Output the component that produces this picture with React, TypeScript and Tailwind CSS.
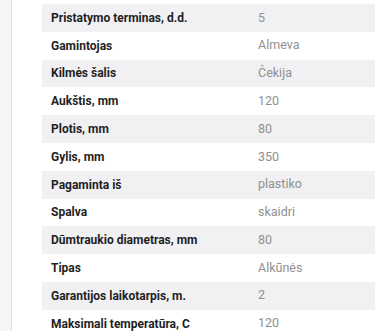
const specs: [string, string][] = [
  ["Pristatymo terminas, d.d.", "5"],
  ["Gamintojas", "Almeva"],
  ["Kilmės šalis", "Čekija"],
  ["Aukštis, mm", "120"],
  ["Plotis, mm", "80"],
  ["Gylis, mm", "350"],
  ["Pagaminta iš", "plastiko"],
  ["Spalva", "skaidri"],
  ["Dūmtraukio diametras, mm", "80"],
  ["Tipas", "Alkūnės"],
  ["Garantijos laikotarpis, m.", "2"],
  ["Maksimali temperatūra, C", "120"],
];

export default function App() {
  return (
    <div className="flex h-[331px] w-[375px] overflow-hidden bg-white font-['Roboto',sans-serif]">
      <div className="w-[12px] shrink-0 border-r border-[#e3e3e6] bg-[#f5f5f7]" />
      <div className="flex-1 pl-[30px] pt-[4px]">
        <table className="w-full border-collapse text-[12px]">
          <tbody>
            {specs.map(([label, value], i) => (
              <tr key={label} className={i % 2 === 0 ? "bg-[#f1f1f4]" : "bg-white"}>
                <td className="h-[27.8px] w-[216px] pl-[9px] font-bold text-[#1f1f1f]">{label}</td>
                <td className="h-[27.8px] text-[12.5px] text-[#909090]">{value}</td>
              </tr>
            ))}
          </tbody>
        </table>
      </div>
    </div>
  );
}
